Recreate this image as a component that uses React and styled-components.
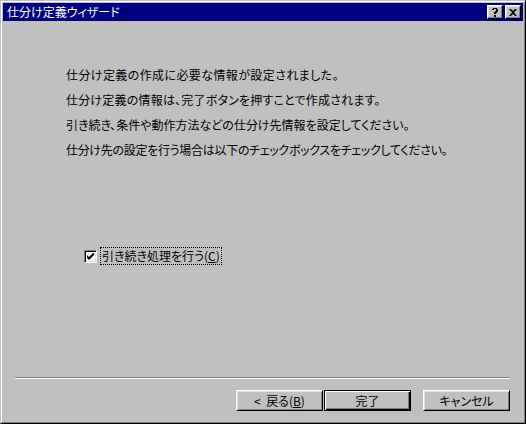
import React from 'react';
import styled, { createGlobalStyle } from 'styled-components';

const GlobalStyle = createGlobalStyle`
  html, body {
    margin: 0;
    padding: 0;
    background: #c0c0c0;
  }
`;

const Frame = styled.div`
  width: 526px;
  height: 424px;
  box-sizing: border-box;
  border: 1px solid;
  border-color: #c0c0c0 #000000 #000000 #c0c0c0;
  background: #c0c0c0;
  font-family: "Noto Sans CJK JP", "Liberation Sans", sans-serif;
  font-size: 12px;
  font-feature-settings: "palt";
  color: #000;
`;

const InnerFrame = styled.div`
  height: 100%;
  box-sizing: border-box;
  border: 1px solid;
  border-color: #ffffff #808080 #808080 #ffffff;
  padding: 1px;
  display: flex;
  flex-direction: column;
`;

const TitleBar = styled.div`
  height: 18px;
  background: #000080;
  display: flex;
  align-items: center;
  padding: 0 2px;
  flex-shrink: 0;
`;

const Title = styled.div`
  flex: 1;
  color: #fff;
  font-size: 12px;
  line-height: 18px;
  padding-left: 2px;
`;

const CaptionButtons = styled.div`
  display: flex;
  gap: 2px;
`;

const CaptionButton = styled.div`
  width: 16px;
  height: 14px;
  box-sizing: border-box;
  background: #c0c0c0;
  border: 1px solid;
  border-color: #ffffff #000000 #000000 #ffffff;
  box-shadow: inset -1px -1px 0 #808080, inset 1px 1px 0 #dfdfdf;
  display: flex;
  align-items: center;
  justify-content: center;
`;

const Body = styled.div`
  flex: 1;
  display: flex;
  flex-direction: column;
  padding-top: 41px;
`;

const Message = styled.div`
  padding-left: 63px;
`;

const Line = styled.div`
  height: 25px;
  line-height: 25px;
  white-space: nowrap;
  letter-spacing: ${p => p.$spacing || 0}px;
`;

const CheckRow = styled.label`
  display: flex;
  align-items: center;
  gap: 4px;
  margin: 86px 0 0 81px;
`;

const CheckBox = styled.span`
  width: 13px;
  height: 13px;
  box-sizing: border-box;
  background: #fff;
  border: 1px solid;
  border-color: #808080 #ffffff #ffffff #808080;
  box-shadow: inset 1px 1px 0 #000000, inset -1px -1px 0 #dfdfdf;
  display: flex;
  align-items: center;
  justify-content: center;
`;

const CheckLabel = styled.span`
  outline: 1px dotted #000;
  padding: 0 1px;
  line-height: 16px;
`;

const Underlined = styled.span`
  text-decoration: underline;
`;

const Footer = styled.div`
  margin-top: auto;
  padding: 0 13px 10px 12px;
`;

const Separator = styled.div`
  border-top: 1px solid #808080;
  border-bottom: 1px solid #ffffff;
  margin-bottom: 11px;
`;

const ButtonRow = styled.div`
  display: flex;
  justify-content: flex-end;
`;

const Button = styled.div`
  width: 87px;
  height: 21px;
  box-sizing: border-box;
  margin-left: ${p => p.$gap || 0}px;
  background: #c0c0c0;
  border: 1px solid;
  border-color: ${p => (p.$default ? '#000000' : '#ffffff #000000 #000000 #ffffff')};
  box-shadow: ${p =>
    p.$default
      ? 'inset 1px 1px 0 #ffffff, inset -1px -1px 0 #000000, inset -2px -2px 0 #808080'
      : 'inset 1px 1px 0 #dfdfdf, inset -1px -1px 0 #808080'};
  display: flex;
  align-items: center;
  justify-content: center;
  line-height: 1;
  white-space: pre;
`;

const CheckMark = () => (
  <svg width="7" height="7" viewBox="0 0 7 7">
    <path d="M0 2 L0 5 L2 7 L7 2 L7 -1 L2 4 Z" fill="#000" />
  </svg>
);

export default function App() {
  return (
    <>
      <GlobalStyle />
      <Frame>
        <InnerFrame>
          <TitleBar>
            <Title>仕分け定義ウィザード</Title>
            <CaptionButtons>
              <CaptionButton>
                <svg width="8" height="9" viewBox="0 0 8 9">
                  <path d="M1 2 V1 H2 V0 H6 V1 H7 V4 H6 V5 H5 V6 H3 V4 H4 V3 H5 V1 H3 V2 Z M3 7 H5 V9 H3 Z" fill="#000" />
                </svg>
              </CaptionButton>
              <CaptionButton>
                <svg width="8" height="7" viewBox="0 0 8 7">
                  <path d="M0 0 L2 0 L4 2 L6 0 L8 0 L5 3.5 L8 7 L6 7 L4 5 L2 7 L0 7 L3 3.5 Z" fill="#000" />
                </svg>
              </CaptionButton>
            </CaptionButtons>
          </TitleBar>
          <Body>
            <Message>
              <Line $spacing={0.4}>仕分け定義の作成に必要な情報が設定されました。</Line>
              <Line $spacing={0.2}>仕分け定義の情報は、完了ボタンを押すことで作成されます。</Line>
              <Line>引き続き、条件や動作方法などの仕分け先情報を設定してください。</Line>
              <Line $spacing={-0.3}>仕分け先の設定を行う場合は以下のチェックボックスをチェックしてください。</Line>
            </Message>
            <CheckRow>
              <CheckBox>
                <CheckMark />
              </CheckBox>
              <CheckLabel>
                引き続き処理を行う(<Underlined>C</Underlined>)
              </CheckLabel>
            </CheckRow>
            <Footer>
              <Separator />
              <ButtonRow>
                <Button>
                  {'<  戻る('}<Underlined>B</Underlined>)
                </Button>
                <Button $default $gap={1}>完了</Button>
                <Button $gap={12}>キャンセル</Button>
              </ButtonRow>
            </Footer>
          </Body>
        </InnerFrame>
      </Frame>
    </>
  );
}
